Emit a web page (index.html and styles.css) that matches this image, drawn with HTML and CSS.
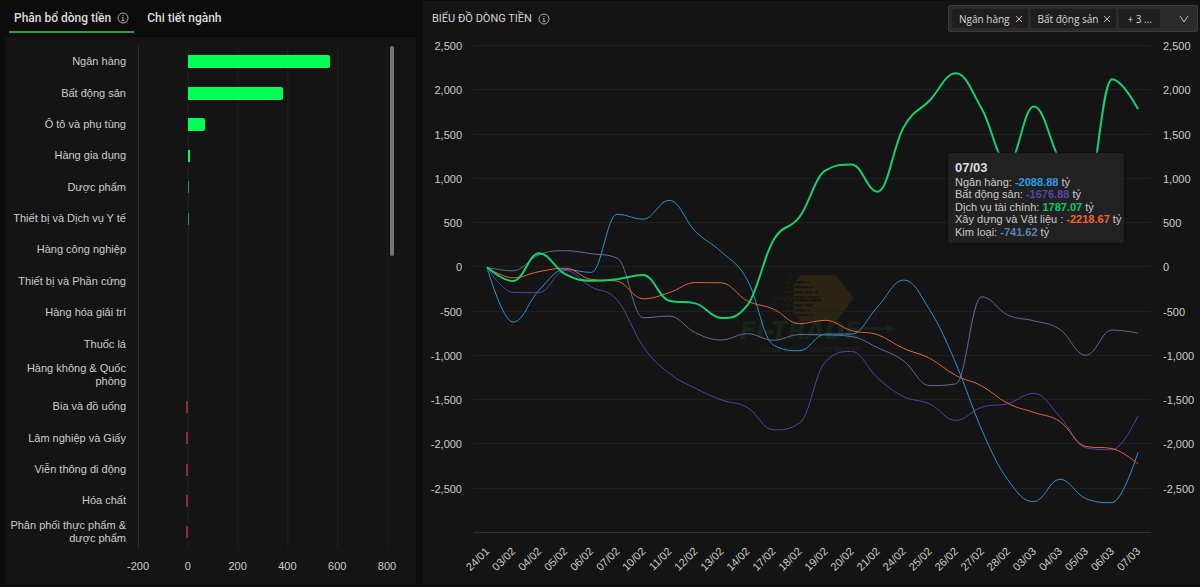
FILE: index.html
```html
<!DOCTYPE html>
<html lang="vi">
<head>
<meta charset="utf-8">
<title>Dòng tiền</title>
<link rel="stylesheet" href="styles.css">
</head>
<body>
<main class="board">
  <section class="sectors">
    <div class="tabs" role="tablist">
      <button class="tab tab-active" role="tab" aria-selected="true">Phân bổ dòng tiền
        <svg class="info" viewBox="0 0 12 12" aria-hidden="true"><circle cx="6" cy="6" r="5"/><path d="M6 3v1.2M5 5.5h1v3M4.6 8.5h2.8"/></svg>
      </button>
      <button class="tab" role="tab" aria-selected="false">Chi tiết ngành</button>
    </div>
    <div class="sector-panel">
      <ul class="rows">
        <li class="row"><span class="name">Ngân hàng</span><span class="track"><i class="bar" style="width:57%"></i></span></li>
        <li class="row"><span class="name">Bất động sản</span><span class="track"><i class="bar" style="width:38.4%"></i></span></li>
        <li class="row"><span class="name">Ô tô và phụ tùng</span><span class="track"><i class="bar" style="width:6.8%"></i></span></li>
        <li class="row"><span class="name">Hàng gia dụng</span><span class="track"><i class="bar bar-thin" style="width:0.8%"></i></span></li>
        <li class="row"><span class="name">Dược phẩm</span><span class="track"><i class="bar bar-thin bar-dim" style="width:0.4%"></i></span></li>
        <li class="row"><span class="name">Thiết bị và Dịch vụ Y tế</span><span class="track"><i class="bar bar-thin bar-dim" style="width:0.4%"></i></span></li>
        <li class="row"><span class="name">Hàng công nghiệp</span><span class="track"></span></li>
        <li class="row"><span class="name">Thiết bị và Phần cứng</span><span class="track"></span></li>
        <li class="row"><span class="name">Hàng hóa giải trí</span><span class="track"></span></li>
        <li class="row"><span class="name">Thuốc lá</span><span class="track"></span></li>
        <li class="row"><span class="name">Hàng không &amp; Quốc phòng</span><span class="track"></span></li>
        <li class="row"><span class="name">Bia và đồ uống</span><span class="track"><i class="bar bar-thin bar-neg" style="width:0.4%"></i></span></li>
        <li class="row"><span class="name">Lâm nghiệp và Giấy</span><span class="track"><i class="bar bar-thin bar-neg" style="width:0.4%"></i></span></li>
        <li class="row"><span class="name">Viễn thông di động</span><span class="track"><i class="bar bar-thin bar-neg" style="width:0.4%"></i></span></li>
        <li class="row"><span class="name">Hóa chất</span><span class="track"><i class="bar bar-thin bar-neg" style="width:0.4%"></i></span></li>
        <li class="row"><span class="name">Phân phối thực phẩm &amp; dược phẩm</span><span class="track"><i class="bar bar-thin bar-neg" style="width:0.4%"></i></span></li>
      </ul>
      <div class="axis"><span>-200</span><span>0</span><span>200</span><span>400</span><span>600</span><span>800</span></div>
      <div class="scroll-thumb"></div>
    </div>
  </section>

  <section class="flow">
    <header class="flow-head">
      <h2 class="flow-title">BIỂU ĐỒ DÒNG TIỀN
        <svg class="info" viewBox="0 0 12 12" aria-hidden="true"><circle cx="6" cy="6" r="5"/><path d="M6 3v1.2M5 5.5h1v3M4.6 8.5h2.8"/></svg>
      </h2>
      <div class="picker">
        <span class="chip">Ngân hàng<button class="chip-x" aria-label="Bỏ Ngân hàng"><svg viewBox="0 0 8 8"><path d="M1 1l6 6M7 1l-6 6"/></svg></button></span>
        <span class="chip">Bất động sản<button class="chip-x" aria-label="Bỏ Bất động sản"><svg viewBox="0 0 8 8"><path d="M1 1l6 6M7 1l-6 6"/></svg></button></span>
        <span class="chip chip-more">+ 3 ...</span>
        <button class="picker-open" aria-label="Chọn ngành"><svg viewBox="0 0 10 8"><path d="M1 1l4 6 4-6"/></svg></button>
      </div>
    </header>
    <div class="chart">
      <svg class="plot" id="plot" role="img" aria-label="Biểu đồ dòng tiền"></svg>
      <div class="tooltip">
        <strong class="tip-date">07/03</strong>
        <span>Ngân hàng: <b class="c-bank">-2088.88</b> tỷ</span>
        <span>Bất động sản: <b class="c-estate">-1676.88</b> tỷ</span>
        <span>Dịch vụ tài chính: <b class="c-finance">1787.07</b> tỷ</span>
        <span>Xây dựng và Vật liệu : <b class="c-build">-2218.67</b> tỷ</span>
        <span>Kim loại: <b class="c-metal">-741.62</b> tỷ</span>
      </div>
    </div>
  </section>
</main>
<script src="chart.js"></script>
</body>
</html>
```

FILE: styles.css
```css
* { box-sizing: border-box; }

body {
  margin: 0;
  background: #0c0c0c;
  color: #cccccc;
  font: 11px/13px "Liberation Sans", Arial, sans-serif;
}

button {
  border: 0;
  padding: 0;
  background: none;
  color: inherit;
  font: inherit;
  cursor: pointer;
}

.board {
  display: grid;
  grid-template-columns: minmax(0, 411fr) minmax(0, 777fr);
  gap: 7px;
  height: 100vh;
  min-height: 480px;
  padding: 0 0 3px 5px;
}

.info {
  width: 12px;
  height: 12px;
  fill: none;
  stroke: #a8a8a8;
  stroke-width: 1;
}

/* Sector bars */
.sectors { display: flex; flex-direction: column; }

.tabs {
  display: flex;
  gap: 8px;
  height: 37px;
  padding: 0 4px 4px;
  font: 500 12px/16px Roboto, sans-serif;
  color: #dddddd;
}

.tab {
  display: flex;
  align-items: center;
  gap: 6px;
  padding: 4px 5px 0;
  border-bottom: 2px solid transparent;
}

.tab-active { border-color: #2f9e4a; }

.sector-panel {
  position: relative;
  flex: 1;
  display: flex;
  flex-direction: column;
  padding-top: 9px;
  background: #141414;
}

.rows {
  flex: 1;
  display: flex;
  flex-direction: column;
  margin: 0;
  padding: 0;
  list-style: none;
}

.row {
  flex: 1 1 0;
  display: grid;
  grid-template-columns: 133px 1fr;
  padding-right: 28px;
}

.name {
  align-self: center;
  padding: 0 12px 0 4px;
  text-align: right;
}

.track {
  position: relative;
  display: flex;
  align-items: center;
  border-right: 1px solid #1c1c1c;
  background:
    linear-gradient(#2c2c2c, #2c2c2c) 0 0 / 1px 100% no-repeat,
    linear-gradient(to right, #1f1f1f 1px, transparent 1px) 0 0 / 20% 100%;
}

.bar {
  position: absolute;
  left: 20%;
  height: 13px;
  border-radius: 0 2px 2px 0;
  background: #00ff57;
}

.bar-thin { height: 12px; border-radius: 0; min-width: 1px; }
.bar-dim { background: #259744; }
.bar-neg { left: auto; right: 80%; min-width: 2px; background: #8c2b34; }

.axis {
  display: flex;
  justify-content: space-between;
  align-items: center;
  height: 36px;
  padding: 0 29px 0 133px;
}

.axis span { display: flex; justify-content: center; width: 0; }

.scroll-thumb {
  position: absolute;
  top: 9px;
  right: 22px;
  width: 4px;
  height: 210px;
  border-radius: 2px;
  background: #747474;
}

/* Money-flow chart */
.flow {
  display: flex;
  flex-direction: column;
  margin-top: 1px;
  background: #141414;
}

.flow-head {
  display: flex;
  justify-content: space-between;
  align-items: center;
  height: 31px;
  padding: 4px 2px 0 9px;
}

.flow-title {
  display: flex;
  align-items: center;
  gap: 6px;
  margin: 0;
  font: 400 11px/16px Roboto, sans-serif;
  color: #d4d4d4;
}

.picker {
  display: flex;
  gap: 3px;
  width: 250px;
  height: 27px;
  padding: 3px;
  border: 1px solid #3b3b3b;
  border-radius: 2px;
  background: #2b2b2b;
  font: 10px/16px "Open Sans", "Noto Sans", sans-serif;
  color: #d8d8d8;
}

.chip {
  display: flex;
  align-items: center;
  gap: 5px;
  padding: 0 5px 0 7px;
  border-radius: 2px;
  background: #1e1e1e;
  white-space: nowrap;
}

.chip-more { padding: 0 8px; }

.chip-x { display: flex; }
.chip-x svg { width: 8px; height: 8px; fill: none; stroke: #bbbbbb; }

.picker-open { display: flex; align-items: center; margin-left: auto; padding: 0 5px; }
.picker-open svg { width: 10px; height: 8px; fill: none; stroke: #c4c4c4; }

.chart { position: relative; flex: 1; min-height: 0; }
.plot { position: absolute; width: 100%; height: 100%; }

.grid-line { stroke: #202020; }
.base-line { stroke: #303030; }
.tick { fill: #cccccc; }
.line { fill: none; stroke-width: 1; }
.line-wide { stroke-width: 2; }

.s-bank { stroke: #2f93d2; }
.s-estate { stroke: #5443a8; }
.s-finance { stroke: #12d26d; }
.s-build { stroke: #e0663c; }
.s-metal { stroke: #5c7198; }

.mark-shape { fill: #2b2415; }
.mark-cut { stroke: #171512; stroke-width: 2; }
.mark-dash { stroke: #201c15; stroke-width: 2; stroke-dasharray: 3 2; }
.mark-name { fill: #17241a; font: italic bold 24px "DejaVu Sans", sans-serif; }
.mark-note { fill: #252725; font: 7px "DejaVu Sans", sans-serif; }
.mark-arrow { fill: #17241a; }

.tooltip {
  position: absolute;
  top: 121px;
  right: 76px;
  display: flex;
  flex-direction: column;
  justify-content: space-between;
  width: 176px;
  height: 90px;
  padding: 8px 7px 5px;
  border-radius: 2px;
  background: #212121;
  box-shadow: 0 0 3px #080808;
  line-height: 12px;
  white-space: nowrap;
}

.tip-date { font-size: 13px; line-height: 14px; color: #dddddd; }

.c-bank { color: #2b9fe8; }
.c-estate { color: #5546a8; }
.c-finance { color: #12c965; }
.c-build { color: #f0642f; }
.c-metal { color: #6480b0; }
```

FILE: chart.js
```js
const days = ["24/01", "03/02", "04/02", "05/02", "06/02", "07/02", "10/02", "11/02", "12/02",
  "13/02", "14/02", "17/02", "18/02", "19/02", "20/02", "21/02", "24/02", "25/02", "26/02",
  "27/02", "28/02", "03/03", "04/03", "05/03", "06/03", "07/03"];

const series = [
  { cls: "s-bank", data: [0, -618, -257, -24, -57, 600, 543, 757, 408, 175, -144, -877, -941, -753, -753, -445, -144, -480, -1080, -1835, -2398, -2646, -2393, -2612, -2657, -2088.88] },
  { cls: "s-estate", data: [0, -283, -286, -35, -220, -370, -896, -1196, -1365, -1497, -1583, -1835, -1759, -1065, -950, -1249, -1459, -1542, -1728, -1579, -1539, -1423, -1685, -2038, -2060, -1676.88] },
  { cls: "s-metal", data: [0, -39, 143, 188, 154, 104, -569, -550, -738, -820, -749, -824, -758, -764, -781, -907, -1057, -1335, -1316, -332, -539, -603, -700, -993, -708, -741.62] },
  { cls: "s-build", data: [0, -118, -48, -9, -136, -156, -355, -285, -172, -175, -378, -471, -636, -598, -715, -761, -916, -1027, -1220, -1339, -1536, -1638, -1741, -2023, -2046, -2218.67] },
  { cls: "s-finance line-wide", data: [0, -155, 160, -77, -150, -133, -85, -378, -407, -573, -426, 307, 569, 1095, 1163, 855, 1583, 1884, 2192, 1791, 1175, 1817, 1210, 800, 2125, 1787.07] }
];

// Spline whose control points never overshoot the neighbouring values.
function smoothPath(p) {
  let d = `M${p[0][0]} ${p[0][1]}`;
  let out = p[0];
  for (let i = 1; i < p.length; i++) {
    const [x, y] = p[i];
    const [px, py] = p[i - 1];
    let into = [x, y];
    let next = [x, y];
    if (i < p.length - 1) {
      const [nx, ny] = p[i + 1];
      const lx = (1.5 * x + px) / 2.5;
      const rx = (1.5 * x + nx) / 2.5;
      let ly = (1.5 * y + py) / 2.5;
      let ry = (1.5 * y + ny) / 2.5;
      const shift = (ry - ly) * (rx - x) / (rx - lx) + y - ry;
      ly += shift;
      ry += shift;
      const inLeft = Math.min(Math.max(ly, Math.min(py, y)), Math.max(py, y));
      if (inLeft !== ly) { ly = inLeft; ry = 2 * y - ly; }
      const inRight = Math.min(Math.max(ry, Math.min(ny, y)), Math.max(ny, y));
      if (inRight !== ry) { ry = inRight; ly = 2 * y - ry; }
      into = [lx, ly];
      next = [rx, ry];
    }
    d += `C${out[0]} ${out[1]} ${into[0]} ${into[1]} ${x} ${y}`;
    out = next;
  }
  return d;
}

function watermark(cx, cy) {
  let s = `<g transform="translate(${cx} ${cy})">`;
  s += `<path class="mark-shape" d="M-13-23H24L41 0 24 23H-13L-19 14V-14Z"/>`;
  const ends = [-13, -3, 0, 5, 9, 9, 2, -3, 0, -13];
  const starts = [-20, -22, -26, -24, -22, -24, -26, -22, -20, -18];
  ends.forEach((end, i) => {
    const y = -21 + i * 5 - (i > 4 ? 2 : 0);
    s += `<path class="mark-dash" d="M${starts[i] - 4} ${y}H-18"/>`;
    s += `<path class="mark-cut" stroke-dasharray="${8 + i % 3 * 3} 2" d="M-18 ${y}H${end}"/>`;
  });
  s += `<path class="mark-dash" d="M-39 0H-22"/>`;
  s += `<text class="mark-name" x="-12" y="41" text-anchor="middle">FI-TRADE</text>`;
  s += `<path class="mark-arrow" d="M48 29H74V26L84 31 74 35V32H48Z"/>`;
  s += `<text class="mark-note" x="-3" y="54" text-anchor="middle">VALUE DATA - SMART INVEST</text></g>`;
  return s;
}

function draw() {
  const svg = document.getElementById("plot");
  const w = svg.clientWidth;
  const h = svg.clientHeight;
  const left = 51, right = w - 49, top = 14, bottom = h - 51;
  const yOf = v => top + (2500 - v) / 5500 * (bottom - top);
  const step = (right - left) / days.length;
  const xOf = i => left + step * (i + 0.5);
  let s = watermark((left + right) / 2, yOf(-350));
  for (let v = 2500; v >= -3000; v -= 500) {
    const y = Math.round(yOf(v)) - 0.5;
    s += `<path class="${v === -3000 ? "base-line" : "grid-line"}" d="M${left} ${y}H${right}"/>`;
    if (v === -3000) continue;
    const t = v.toLocaleString("en-US");
    s += `<text class="tick" x="${left - 12}" y="${y + 4}" text-anchor="end">${t}</text>`;
    s += `<text class="tick" x="${right + 12}" y="${y + 4}">${t}</text>`;
  }
  days.forEach((t, i) => {
    s += `<text class="tick" text-anchor="end" transform="translate(${xOf(i) + 3} ${bottom + 19}) rotate(-45)">${t}</text>`;
  });
  series.forEach(o => {
    s += `<path class="line ${o.cls}" d="${smoothPath(o.data.map((v, i) => [xOf(i), yOf(v)]))}"/>`;
  });
  svg.innerHTML = s;
}

draw();
window.addEventListener("resize", draw);
```
